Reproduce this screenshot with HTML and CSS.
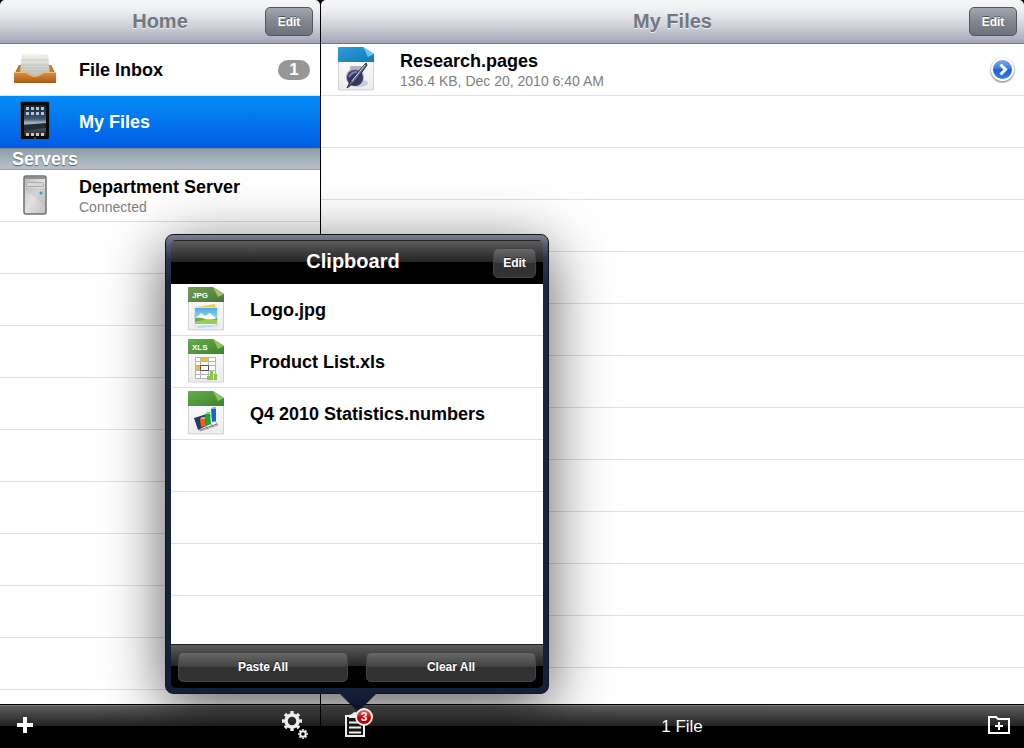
FILE: index.html
```html
<!DOCTYPE html>
<html lang="en">

<head>
    <meta charset="UTF-8">
    <meta name="viewport" content="width=device-width, initial-scale=1.0">
    <title>My Files</title>
    <link rel="stylesheet" href="styles.css">
</head>

<body>
    <svg class="defs" aria-hidden="true">
        <defs>
            <linearGradient id="paper" x2="0" y2="1">
                <stop offset="0" stop-color="#fff" />
                <stop offset="1" stop-color="#ececec" />
            </linearGradient>
            <linearGradient id="blue" x2="1" y2="1">
                <stop offset="0" stop-color="#2b9fdb" />
                <stop offset="1" stop-color="#1478b8" />
            </linearGradient>
            <linearGradient id="green" x2="1" y2="1">
                <stop offset="0" stop-color="#67ad4b" />
                <stop offset="1" stop-color="#3c8330" />
            </linearGradient>
            <linearGradient id="olive" x2="1" y2="1">
                <stop offset="0" stop-color="#70a052" />
                <stop offset="1" stop-color="#4b7539" />
            </linearGradient>
            <linearGradient id="wood" x2="0" y2="1">
                <stop offset="0" stop-color="#dd9145" />
                <stop offset="1" stop-color="#a95a13" />
            </linearGradient>
            <linearGradient id="sheets" x2="0" y2="1">
                <stop offset="0" stop-color="#f1f3ea" />
                <stop offset="1" stop-color="#b9beb8" />
            </linearGradient>
            <linearGradient id="screen" x2="0" y2="1">
                <stop offset="0" stop-color="#17202b" />
                <stop offset=".45" stop-color="#40566b" />
                <stop offset=".58" stop-color="#a9bccb" />
                <stop offset=".66" stop-color="#5c6970" />
                <stop offset="1" stop-color="#1a2129" />
            </linearGradient>
            <linearGradient id="metal" x2="1" y2="1">
                <stop offset="0" stop-color="#b8b8b8" />
                <stop offset=".5" stop-color="#e2e2e2" />
                <stop offset="1" stop-color="#bdbdbd" />
            </linearGradient>
            <linearGradient id="sky" x2="0" y2="1">
                <stop offset="0" stop-color="#48aee6" />
                <stop offset="1" stop-color="#c3e8f6" />
            </linearGradient>
            <linearGradient id="disclosure" x2="0" y2="1">
                <stop offset="0" stop-color="#7ba9ee" />
                <stop offset=".5" stop-color="#3a7be0" />
                <stop offset=".5" stop-color="#1b63da" />
                <stop offset="1" stop-color="#2f80ee" />
            </linearGradient>
        </defs>
    </svg>

    <div class="app">
        <section class="pane sidebar">
            <header class="navbar">
                <h1>Home</h1>
                <button class="nav-button">Edit</button>
            </header>

            <div class="pane-body">
                <ul class="rows">
                    <li>
                        <a class="row" href="#inbox">
                            <span class="row-icon">
                                <svg width="42" height="30" viewBox="0 0 42 30">
                                    <path d="M5 11h32l4 8v5H1v-5z" fill="#7d4411" />
                                    <path d="M5 11l2 0v9H1z" fill="#c67b31" />
                                    <path d="M37 11l-2 0v9h6z" fill="#c67b31" />
                                    <path d="M8 1q0-1 1-1h24q1 0 1 1l2 19q-15 6-30 0z" fill="url(#sheets)" />
                                    <path d="M7 6h28M6 11h30M6 14h30M6 17h30" stroke="#aeb2a8" stroke-opacity=".5" />
                                    <path d="M0 18h11q2 0 4 2 3 2 6 2t6-2q2-2 4-2h11v11H0z" fill="url(#wood)" />
                                    <path d="M0 18.500h11q2 0 4 2 3 2 6 2t6-2q2-2 4-2h11" fill="none" stroke="#f0bb78" />
                                </svg>
                            </span>
                            <span class="row-name">File Inbox</span>
                            <span class="count">1</span>
                        </a>
                    </li>
                    <li>
                        <a class="row selected" href="#files" aria-current="page">
                            <span class="row-icon">
                                <svg width="30" height="40" viewBox="0 0 30 40">
                                    <rect x=".5" y=".5" width="29" height="38" rx="2" fill="#0a0a0c" stroke="#46576a" />
                                    <rect x="4" y="4" width="22" height="31" fill="url(#screen)" />
                                    <path d="M6 7.500h18M6 12.500h18" stroke="#a9c6dc" stroke-width="3" stroke-dasharray="3 2" />
                                    <path d="M4 24l22-2v5l-22 3z" fill="#242c30" />
                                    <path d="M6 33.500h18" stroke="#d8c6a4" stroke-width="3" stroke-dasharray="3 2" />
                                    <circle cx="15" cy="37" r="1" fill="#555" />
                                </svg>
                            </span>
                            <span class="row-name">My Files</span>
                        </a>
                    </li>
                </ul>

                <h2 class="section-title">Servers</h2>
                <ul class="rows">
                    <li>
                        <a class="row" href="#server">
                            <span class="row-icon">
                                <svg width="24" height="40" viewBox="0 0 24 40">
                                    <rect x="1" y="1" width="22" height="38" rx="2" fill="url(#metal)" stroke="#707070" stroke-width="1.500" />
                                    <path d="M2 2h20v2H2z" fill="#909090" />
                                    <rect x="3.500" y="7.500" width="17" height="4" rx="1" fill="#d8d8d8" stroke="#aaa" />
                                    <path d="M2 14l20 17V13H2z" fill="#999" opacity=".2" />
                                    <circle cx="18" cy="18" r="1.500" fill="#1aa1dd" />
                                </svg>
                            </span>
                            <span class="row-text">
                                <span class="row-name">Department Server</span>
                                <span class="row-detail">Connected</span>
                            </span>
                        </a>
                    </li>
                </ul>
                <div class="blank-rows"></div>
            </div>

            <footer class="toolbar">
                <button class="tool" aria-label="Add">
                    <svg width="16" height="16" viewBox="0 0 16 16">
                        <path d="M8 0v16M0 8h16" stroke="#fff" stroke-width="4" />
                    </svg>
                </button>
                <button class="tool" aria-label="Settings">
                    <svg width="28" height="30" viewBox="0 0 28 30" fill="none" stroke="#eee">
                        <circle cx="12" cy="11" r="6" stroke-width="3.500" />
                        <circle cx="12" cy="11" r="8.500" stroke-width="3" pathLength="16" stroke-dasharray="1 1" stroke-dashoffset=".5" />
                        <circle cx="23" cy="24" r="2.800" stroke-width="2" />
                        <circle cx="23" cy="24" r="4.200" stroke-width="1.600" pathLength="16" stroke-dasharray="1 1" stroke-dashoffset=".5" />
                    </svg>
                </button>
            </footer>
        </section>

        <main class="pane">
            <header class="navbar">
                <h1>My Files</h1>
                <button class="nav-button">Edit</button>
            </header>

            <div class="pane-body">
                <ul class="rows">
                    <li>
                        <a class="row" href="#research">
                            <span class="row-icon">
                                <svg width="36" height="44" viewBox="0 0 36 44">
                                    <path d="M.5 1h24L35.500 7v36h-35z" fill="url(#paper)" stroke="#d2d2d2" />
                                    <path d="M0 1q0-1 1-1h24l11 7v8H0z" fill="url(#blue)" />
                                    <path d="M25 0l5 10 6-3z" fill="#6cc4ec" />
                                    <ellipse cx="20" cy="36" rx="10" ry="4" fill="#000" opacity=".15" />
                                    <rect x="12" y="19" width="12" height="5" rx="1" fill="#b4b5bd" />
                                    <circle cx="17" cy="30" r="9" fill="#a9a9b5" />
                                    <circle cx="17" cy="31" r="8" fill="#38366d" />
                                    <path d="M11 30q4-7 9-4" fill="none" stroke="#807cc0" stroke-width="2" />
                                    <path d="M28 16l1 2-12 17-8 6 4-8z" fill="#58647a" stroke="#20283a" />
                                    <path d="M27 18L14 34" stroke="#d2dae6" />
                                </svg>
                            </span>
                            <span class="row-text">
                                <span class="row-name">Research.pages</span>
                                <span class="row-detail">136.4 KB, Dec 20, 2010 6:40 AM</span>
                            </span>
                            <svg class="disclosure" width="25" height="25" viewBox="0 0 25 25">
                                <circle cx="12.500" cy="12.500" r="10.500" fill="url(#disclosure)" stroke="#fff" stroke-width="2" />
                                <path d="M10.500 7.500l5 5-5 5" fill="none" stroke="#fff" stroke-width="3" />
                            </svg>
                        </a>
                    </li>
                </ul>
                <div class="blank-rows"></div>
            </div>

            <footer class="toolbar">
                <button class="tool" aria-label="Clipboard">
                    <svg width="22" height="27" viewBox="0 0 22 27">
                        <path d="M2 5h18v20H2z" fill="#161616" stroke="#eee" stroke-width="2" />
                        <path d="M5 7V4l3-1q3-4 6 0l3 1v3z" fill="#eee" />
                        <path d="M5 11.500h12M5 16.500h12M5 21.500h12" stroke="#eee" stroke-width="2" />
                    </svg>
                    <span class="badge">3</span>
                </button>
                <p class="status">1 File</p>
                <button class="tool" aria-label="New folder">
                    <svg width="22" height="19" viewBox="0 0 22 19" fill="none" stroke="#fff" stroke-width="2">
                        <path d="M1 18V2h7l2 2h11v14z" />
                        <path d="M11 7v8M7 11h8" />
                    </svg>
                </button>
            </footer>
        </main>

        <section class="popover" role="dialog" aria-labelledby="clipboard-title">
            <div class="popover-content">
                <header class="popover-bar">
                    <h2 id="clipboard-title">Clipboard</h2>
                    <button class="dark-button">Edit</button>
                </header>

                <div class="pane-body">
                    <ul class="rows">
                        <li>
                            <a class="row" href="#logo">
                                <span class="row-icon">
                                    <svg width="36" height="44" viewBox="0 0 36 44">
                                        <path d="M.5 1h24L35.500 7v36h-35z" fill="url(#paper)" stroke="#d2d2d2" />
                                        <path d="M0 1q0-1 1-1h24l11 7v8H0z" fill="url(#olive)" />
                                        <path d="M25 0l5 10 6-3z" fill="#a6c275" />
                                        <text x="4" y="11" class="file-type">JPG</text>
                                        <path d="M8 20l19-3 1 6H8z" fill="#fac54a" />
                                        <path d="M8 37l22 0 0 2-20 2z" fill="#a6dcf2" />
                                        <path d="M6 20l24 1-1 17-22 1z" fill="#fff" stroke="#ddd" />
                                        <path d="M7 21h22v16H7z" fill="url(#sky)" />
                                        <path d="M7 32l6-6 4 3 5-3 7 6v2H7z" fill="#fff" />
                                        <path d="M7 31q6-1 10 1t12-1v6H7z" fill="#67b143" />
                                        <path d="M7 35q12-4 22-2v4H7z" fill="#9bce55" />
                                    </svg>
                                </span>
                                <span class="row-name">Logo.jpg</span>
                            </a>
                        </li>
                        <li>
                            <a class="row" href="#products">
                                <span class="row-icon">
                                    <svg width="36" height="44" viewBox="0 0 36 44">
                                        <path d="M.5 1h24L35.500 7v36h-35z" fill="url(#paper)" stroke="#d2d2d2" />
                                        <path d="M0 1q0-1 1-1h24l11 7v8H0z" fill="url(#green)" />
                                        <path d="M25 0l5 10 6-3z" fill="#8fc45e" />
                                        <text x="4" y="11" class="file-type">XLS</text>
                                        <path d="M8 18h19v22H8z" fill="#fff" />
                                        <path d="M13 18h7v4h-7zM8 27h4v4H8z" fill="#f9b832" />
                                        <path d="M7.500 18.500h20v21h-20zM12.500 18v22M20.500 18v22M8 22.500h19M8 26.500h19M8 31.500h19M8 35.500h19" fill="none" stroke="#b5b5b5" />
                                        <path d="M12.500 26.500h8v5h-8z" fill="#fff" stroke="#555" />
                                        <path d="M19 37h3v4h-3zM22 32h3v9h-3zM26 35h3v6h-3z" fill="#8cc63f" />
                                    </svg>
                                </span>
                                <span class="row-name">Product List.xls</span>
                            </a>
                        </li>
                        <li>
                            <a class="row" href="#statistics">
                                <span class="row-icon">
                                    <svg width="36" height="44" viewBox="0 0 36 44">
                                        <path d="M.5 1h24L35.500 7v36h-35z" fill="url(#paper)" stroke="#d2d2d2" />
                                        <path d="M0 1q0-1 1-1h24l11 7v8H0z" fill="url(#green)" />
                                        <path d="M25 0l5 10 6-3z" fill="#8fc45e" />
                                        <path d="M8 28l14-4 8 10-18 6z" fill="#f5f5f5" stroke="#a2a7b4" />
                                        <path d="M6 27l13-4 3 10-12 6z" fill="#263b69" />
                                        <path d="M12 39l17-6M17 34l3 4M22 32l3 4" stroke="#777b84" />
                                        <path d="M12 28l5-1 1 8-5 1z" fill="#f55c18" />
                                        <path d="M12 28l2-2 4 0-1 2z" fill="#ffa64a" />
                                        <path d="M17 23l5-1 1 11-5 1z" fill="#19ad21" />
                                        <path d="M17 23l2-2 4 0-1 2z" fill="#72e45d" />
                                        <path d="M23 18l5-1v13l-4 1z" fill="#1b5fe4" />
                                        <path d="M23 18l2-2h3v2z" fill="#77b7ff" />
                                    </svg>
                                </span>
                                <span class="row-name">Q4 2010 Statistics.numbers</span>
                            </a>
                        </li>
                    </ul>
                    <div class="blank-rows"></div>
                </div>

                <footer class="popover-bar actions">
                    <button class="dark-button">Paste All</button>
                    <button class="dark-button">Clear All</button>
                </footer>
            </div>
        </section>
    </div>
</body>

</html>
```

FILE: styles.css
```css
* {
    margin: 0;
    padding: 0;
    box-sizing: border-box;
}

body {
    font-family: "Liberation Sans", Arial, Helvetica, sans-serif;
    color: #000;
    background: #000;
}

button {
    font-family: inherit;
    cursor: pointer;
}

svg {
    display: block;
    flex-shrink: 0;
}

.defs {
    position: absolute;
    width: 0;
    height: 0;
}

.app {
    display: grid;
    grid-template-columns: 320px 1fr;
    gap: 1px;
    height: 100vh;
    position: relative;
    overflow: hidden;
}

.pane {
    display: flex;
    flex-direction: column;
    min-width: 0;
}

.pane-body {
    flex: 1;
    display: flex;
    flex-direction: column;
    min-height: 0;
    overflow: hidden;
    background: #fff;
}

/* Navigation bars */
.navbar,
.popover-bar {
    display: grid;
    grid-template-columns: 1fr auto 1fr;
    align-items: center;
    height: 44px;
    padding: 0 7px;
}

.navbar {
    background: linear-gradient(#f5f6f8, #eeeff2 25%, #cfd1d9 60%, #a3a7b5);
    border-bottom: 1px solid #727888;
    border-radius: 5px 5px 0 0;
}

.navbar h1,
.popover-bar h2 {
    grid-column: 2;
    font-size: 20px;
    line-height: 24px;
}

.navbar h1 {
    padding-bottom: 2px;
    color: #717880;
    text-shadow: 0 1px 0 #eef0f3;
}

.nav-button,
.dark-button {
    color: #fff;
    font-size: 12px;
    font-weight: bold;
    border-radius: 5px;
}

.nav-button {
    justify-self: end;
    width: 48px;
    height: 29px;
    border: 1px solid #53575e;
    background: linear-gradient(#a3a7ad, #81868f 50%, #6c727d);
    text-shadow: 0 -1px 0 #50555e;
}

/* Lists */
.rows {
    list-style: none;
}

.row {
    display: flex;
    align-items: center;
    height: 52px;
    padding: 0 10px 0 13px;
    border-bottom: 1px solid #dfdfdf;
    color: #000;
    text-decoration: none;
}

.row-icon {
    display: flex;
    justify-content: center;
    width: 44px;
    margin-right: 22px;
    padding-bottom: 2px;
}

.row-text {
    display: flex;
    flex-direction: column;
    padding-top: 2px;
}

.row-name {
    font-size: 18px;
    font-weight: bold;
    line-height: 20px;
}

.row-detail {
    color: #808080;
    font-size: 14px;
    line-height: 20px;
}

.row.selected {
    color: #fff;
    background: linear-gradient(#058cf5, #015de6);
    border-bottom-color: #015de6;
}

.count {
    margin-left: auto;
    width: 32px;
    border-radius: 10px;
    background: #979797;
    color: #fff;
    font-size: 17px;
    font-weight: bold;
    line-height: 20px;
    text-align: center;
}

.disclosure {
    margin-left: auto;
    margin-right: -1px;
    filter: drop-shadow(0 1px 1px rgba(0, 0, 0, 0.6));
}

.section-title {
    height: 22px;
    padding-left: 12px;
    border-top: 1px solid #7c8a98;
    border-bottom: 1px solid #989fa8;
    background: linear-gradient(#909faa, #b7c0c8);
    color: #fff;
    font-size: 18px;
    line-height: 20px;
    text-shadow: 0 1px 1px #59636d;
}

.blank-rows {
    flex: 1;
    background: repeating-linear-gradient(#fff 0 51px, #dfdfdf 51px 52px);
}

.file-type {
    font-size: 8px;
    font-weight: bold;
    fill: #fff;
}

/* Bottom toolbars */
.toolbar {
    display: flex;
    align-items: center;
    justify-content: space-between;
    height: 44px;
    padding: 0 12px 4px 17px;
    border-top: 1px solid #000;
    background: linear-gradient(#777 1px, #5b5b5b 1px, #232323 21px, #000 21px);
}

.tool {
    position: relative;
    z-index: 2;
    border: none;
    background: none;
}

main .toolbar {
    padding: 0 14px 4px 23px;
}

.badge {
    position: absolute;
    top: -3px;
    right: -7px;
    width: 18px;
    height: 18px;
    border: 2px solid #eee;
    border-radius: 50%;
    background: linear-gradient(#e06767, #cc1717 50%, #c10000 50%);
    color: #fff;
    font-size: 12px;
    font-weight: bold;
    line-height: 14px;
    text-align: center;
}

.status {
    padding: 5px 0 0 10px;
    color: #fff;
    font-size: 17px;
    line-height: 20px;
}

/* Clipboard popover */
.popover {
    position: absolute;
    z-index: 1;
    left: 165px;
    bottom: 54px;
    width: 384px;
    padding: 5px;
    border: 1px solid #10151f;
    border-radius: 8px;
    background: linear-gradient(#7a8090, #555c70 10px, #2a344d 24px, #1b2740 50px, #141f38);
    box-shadow: 0 14px 60px rgba(0, 0, 0, 0.65);
}

.popover::after {
    content: "";
    position: absolute;
    top: 100%;
    left: 173px;
    width: 38px;
    height: 19px;
    background: linear-gradient(#141f38, #0b1222);
    clip-path: polygon(0 0, 100% 0, 50% 100%);
}

.popover-content {
    border-radius: 5px;
    overflow: hidden;
}

.popover .pane-body {
    height: 360px;
}

.popover-bar {
    background: linear-gradient(#222 1px, #5b5b5b 1px, #242424 22px, #000 22px);
}

.popover-bar h2 {
    padding: 0 8px 2px 0;
    color: #fff;
}

.dark-button {
    height: 30px;
    margin-top: 2px;
    border: 1px solid #444;
    background: linear-gradient(#686868, #414141 50%, #303030 50%, #333);
    text-shadow: 0 -1px 0 #222;
}

.popover-bar > .dark-button {
    justify-self: end;
    width: 43px;
}

.popover-bar.actions {
    grid-template-columns: 1fr 1fr;
    gap: 18px;
}

.actions > .dark-button {
    width: 100%;
}
```
